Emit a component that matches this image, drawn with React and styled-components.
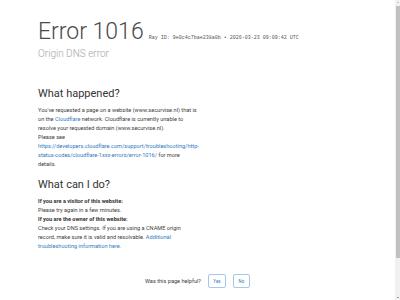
import React from "react";
import styled, { createGlobalStyle } from "styled-components";

const Global = createGlobalStyle`
  html, body { margin: 0; padding: 0; background: #fff; overflow: hidden; }
  body { font-family: Roboto, "Open Sans", sans-serif; color: #404040; }
`;

const Page = styled.div`
  width: 395px;
  height: 300px;
  padding: 20px 0 0 38px;
  box-sizing: border-box;
`;

const Header = styled.header`
  display: flex;
  flex-direction: column;
`;

const TitleRow = styled.div`
  display: flex;
  align-items: baseline;
  gap: 5px;
`;

const Title = styled.h1`
  margin: 0;
  font-size: 23px;
  line-height: 1;
  font-weight: 300;
  color: #4a4a4a;
`;

const RayId = styled.span`
  font-family: "Liberation Mono", "DejaVu Sans Mono", monospace;
  font-size: 5px;
  color: #555;
`;

const Subtitle = styled.h2`
  margin: 5px 0 0;
  font-size: 10px;
  line-height: 1.2;
  font-weight: 300;
  color: #a5a5a5;
`;

const Section = styled.section`
  width: 160px;
  margin-top: ${(p) => p.$top}px;
`;

const Heading = styled.h2`
  margin: 0 0 6px;
  font-size: 11px;
  line-height: 1.2;
  font-weight: 400;
  color: #333;
`;

const Text = styled.p`
  margin: 0;
  font-size: 5.6px;
  line-height: 9px;
  color: #404040;
`;

const Label = styled.h3`
  margin: 0;
  font-size: 5.6px;
  line-height: 9px;
  font-weight: 700;
  color: #333;
`;

const Link = styled.a`
  color: #2f7bbf;
  text-decoration: none;
`;

const Feedback = styled.div`
  display: flex;
  justify-content: center;
  align-items: center;
  gap: 7px;
  margin-top: 23px;
  margin-left: -38px;
  font-size: 5.6px;
  color: #404040;
`;

const Button = styled.button`
  font-family: inherit;
  font-size: 4.5px;
  color: #2f7bbf;
  background: #fff;
  border: 1px solid #a9c6ea;
  border-radius: 2px;
  width: ${(p) => p.$w}px;
  height: 14px;
  padding: 0;
`;

const ScrollTrack = styled.div`
  position: fixed;
  top: 0;
  right: 0;
  width: 5px;
  height: 300px;
  background: #f1f1f1;
  display: flex;
  flex-direction: column;
  align-items: center;
`;

const Arrow = styled.div`
  width: 0;
  height: 0;
  margin: 2px 0;
  border-left: 1.5px solid transparent;
  border-right: 1.5px solid transparent;
  ${(p) => (p.$down ? "border-top: 1.5px solid #505050;" : "border-bottom: 1.5px solid #a3a3a3;")}
`;

const Thumb = styled.div`
  width: 4px;
  height: 252px;
  margin-top: 0.5px;
  background: #c1c1c1;
`;

const Spacer = styled.div`
  flex: 1;
`;

export default function App() {
  return (
    <>
      <Global />
      <Page>
        <Header>
          <TitleRow>
            <Title>Error 1016</Title>
            <RayId>Ray ID: 9e0c4c7bae238a0b • 2026-03-23 09:09:42 UTC</RayId>
          </TitleRow>
          <Subtitle>Origin DNS error</Subtitle>
        </Header>
        <Section $top={27}>
          <Heading>What happened?</Heading>
          <Text>
            You've requested a page on a website (www.securvise.nl) that is on the{" "}
            <Link href="#">Cloudflare</Link> network. Cloudflare is currently unable to
            resolve your requested domain (www.securvise.nl).
          </Text>
          <Text>
            Please see{" "}
            <Link href="#">
              https://developers.cloudflare.com/support/troubleshooting/http-status-codes/cloudflare-1xxx-errors/error-1016/
            </Link>{" "}
            for more details.
          </Text>
        </Section>
        <Section $top={9}>
          <Heading>What can I do?</Heading>
          <Label>If you are a visitor of this website:</Label>
          <Text>Please try again in a few minutes.</Text>
          <Label>If you are the owner of this website:</Label>
          <Text>
            Check your DNS settings. If you are using a CNAME origin record, make sure it is
            valid and resolvable. <Link href="#">Additional troubleshooting information here.</Link>
          </Text>
        </Section>
        <Feedback>
          <span>Was this page helpful?</span>
          <Button $w={18}>Yes</Button>
          <Button $w={17}>No</Button>
        </Feedback>
      </Page>
      <ScrollTrack aria-hidden="true">
        <Arrow />
        <Thumb />
        <Spacer />
        <Arrow $down />
      </ScrollTrack>
    </>
  );
}
